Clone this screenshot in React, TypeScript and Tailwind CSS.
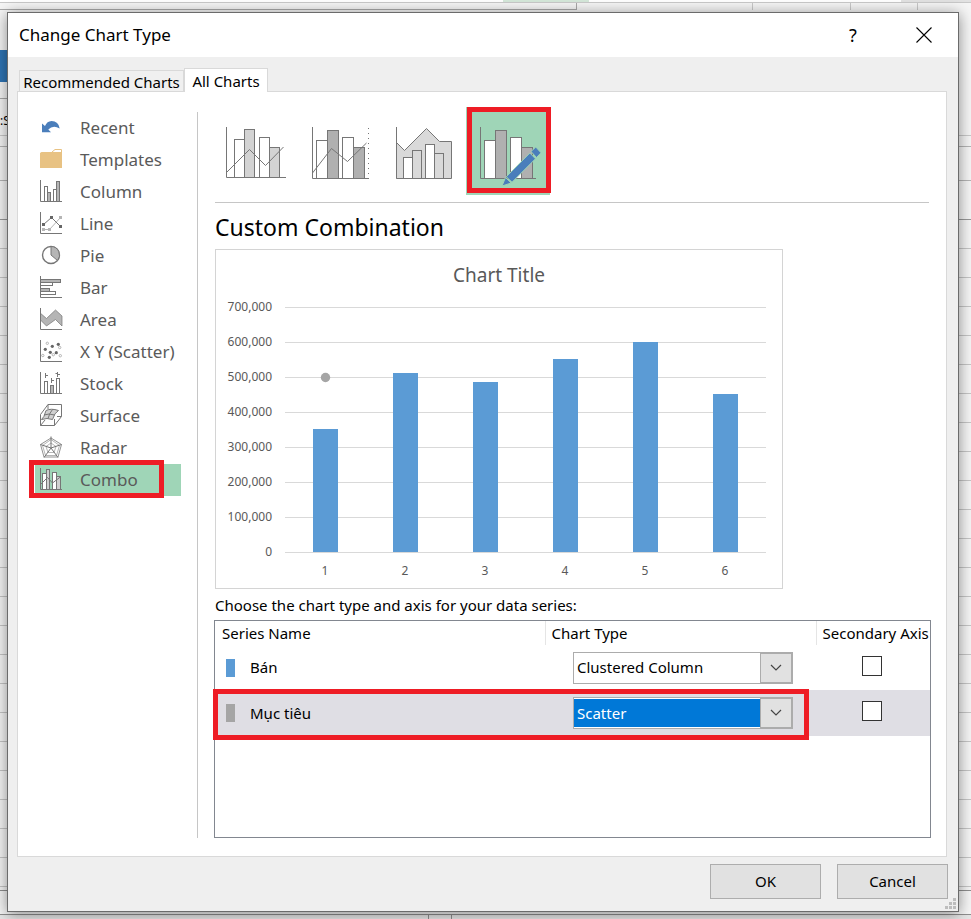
import { useState, type ReactNode } from 'react'

const GRAY = '#767676'

// ---- sidebar icons, all on a 24x24 grid ----

function Axis() {
  return <path d="M1.5 0V21.5H23" fill="none" stroke={GRAY} />
}

function Bar({ x, y, w, h, fill = '#fff' }: { x: number; y: number; w: number; h: number; fill?: string }) {
  return <rect x={x} y={y} width={w} height={h} fill={fill} stroke={GRAY} />
}

const categories: { name: string; icon: ReactNode }[] = [
  {
    name: 'Recent',
    icon: <path d="M3 7.5V16.3H12L9.3 13.6Q14 8.5 20.7 12.5Q19.5 5 12.5 5Q8 5.2 6 10Z" fill="#4a7ebb" />,
  },
  {
    name: 'Templates',
    icon: (
      <>
        <path d="M13 4L16 1.5H22.5V5" fill="#fff" stroke="#e8c283" />
        <path d="M1 5L2.5 4H23V20H1Z" fill="#e8c283" />
      </>
    ),
  },
  {
    name: 'Column',
    icon: (
      <>
        <Bar x={5.5} y={6.5} w={3} h={15} />
        <Bar x={8.5} y={12.5} w={3} h={9} fill="#b5b5b5" />
        <Bar x={14.5} y={9.5} w={3} h={12} />
        <Bar x={17.5} y={1.5} w={3} h={20} fill="#b5b5b5" />
        <Axis />
      </>
    ),
  },
  {
    name: 'Line',
    icon: (
      <>
        <path d="M4.5 17.5H10.5L21.5 5.5" fill="none" stroke="#b5b5b5" />
        <path d="M3 16H6V19H3ZM9 16H12V19H9ZM20 4H23V7H20Z" fill="#b5b5b5" />
        <path d="M4.5 12.5L12.5 5.5L21.5 14.5" fill="none" stroke={GRAY} />
        <path d="M3 11H6V14H3ZM11 4H14V7H11ZM20 13H23V16H20Z" fill="#666" />
        <Axis />
      </>
    ),
  },
  {
    name: 'Pie',
    icon: (
      <>
        <circle cx="12" cy="11" r="8.5" fill="#fff" stroke={GRAY} strokeWidth="1.4" />
        <path d="M12 11V2.5A8.5 8.5 0 0 1 18.5 16.5Z" fill="#b5b5b5" stroke={GRAY} />
      </>
    ),
  },
  {
    name: 'Bar',
    icon: (
      <>
        <Bar x={1.5} y={3.5} w={20} h={3} fill="#b5b5b5" />
        <Bar x={1.5} y={6.5} w={12} h={3} />
        <Bar x={1.5} y={12.5} w={9} h={3} fill="#b5b5b5" />
        <Bar x={1.5} y={15.5} w={15} h={3} />
        <Axis />
      </>
    ),
  },
  {
    name: 'Area',
    icon: (
      <>
        <path
          d="M1.5 5.3L7.5 10.5L16.5 2L23 8V18L16.5 11.5L7.5 18L1.5 12Z"
          fill="#b5b5b5"
          stroke={GRAY}
          strokeWidth="0.7"
        />
        <Axis />
      </>
    ),
  },
  {
    name: 'X Y (Scatter)',
    icon: (
      <>
        {[[8.3, 3.3], [20.7, 7.5], [3.8, 15.5], [14.3, 14.7], [21.3, 15.7]].map(([x, y]) => (
          <circle key={x} cx={x} cy={y} r="1.2" fill="#fff" stroke="#a5a5a5" strokeWidth="0.8" />
        ))}
        {[[19.3, 4.3], [13.3, 6.3], [6.3, 9.3], [11.3, 12.3], [17.3, 12.7], [10.3, 17.3]].map(([x, y]) => (
          <circle key={x} cx={x} cy={y} r="1.6" fill="#666" />
        ))}
        <Axis />
      </>
    ),
  },
  {
    name: 'Stock',
    icon: (
      <>
        <Bar x={5.5} y={9.5} w={3} h={12} />
        <Bar x={11.5} y={13.5} w={3} h={8} fill="#b5b5b5" />
        <Bar x={17.5} y={6.5} w={3} h={15} />
        <path d="M6.5 1V6M6.5 3.5H9M12.5 6V11M12.5 8.5H15M18.5 0V5M18.5 2.5H21M16.5 1.5H18.5" stroke={GRAY} />
        <Axis />
      </>
    ),
  },
  {
    name: 'Surface',
    icon: (
      <>
        <path
          d="M1.5 10.5L9 0.5H22.5V12.5L15.5 21.5H1.5ZM9 0.5V5M1.5 21.5L6 16M15.5 21.5V15M22.5 12.5H18"
          fill="none"
          stroke={GRAY}
        />
        <path d="M2.5 15.5Q5 14 7 6.5Q12 4 19.5 6.5Q15.5 8.5 13.5 15.5Q8 13.5 2.5 15.5Z" fill="#d0d0d0" stroke={GRAY} />
        <path d="M5 11Q10 9 15.5 11M9 14.5Q10.5 9 13.5 5.5" fill="none" stroke={GRAY} />
      </>
    ),
  },
  {
    name: 'Radar',
    icon: (
      <g fill="none" stroke={GRAY}>
        <path d="M12 3.5L20.5 9.5L17.5 19.5H6.5L3.5 9.5Z" stroke="#b5b5b5" />
        <path d="M12 7L17 10.5L15 16.5H9L7 10.5Z" stroke="#b5b5b5" />
        <path d="M12 0.5V12L22.5 8.5M12 12L19 21.5M12 12L5 21.5M12 12L1.5 8.5" />
        <path d="M1.5 8.5L12 2L22.5 8.5L19 21H5Z" strokeWidth="0.8" />
      </g>
    ),
  },
  {
    name: 'Combo',
    icon: (
      <>
        <Bar x={3.5} y={5.5} w={4} h={16} />
        <Bar x={7.5} y={1.5} w={3} h={20} fill="#d0d0d0" />
        <Bar x={13.5} y={4.5} w={4} h={17} />
        <Bar x={17.5} y={8.5} w={4} h={13} fill="#d0d0d0" />
        <path d="M2 16L8.5 9.5L13.5 15L22 8.5" fill="none" stroke={GRAY} />
        <Axis />
      </>
    ),
  },
]

// ---- combo subtypes, 84x88 each ----

const subtypes: { name: string; art: ReactNode }[] = [
  {
    name: 'Clustered Column - Line',
    art: (
      <>
        <Bar x={20.5} y={32.5} w={10} h={38} />
        <Bar x={30.5} y={22.5} w={10} h={48} fill="#d3d3d3" />
        <Bar x={45.5} y={30.5} w={10} h={40} />
        <Bar x={55.5} y={40.5} w={10} h={30} fill="#d3d3d3" />
        <path d="M12.5 65.5L35.5 42.5L51.5 58.5L69.5 40M12.5 20V70.5H72" fill="none" stroke={GRAY} />
      </>
    ),
  },
  {
    name: 'Clustered Column - Line on Secondary Axis',
    art: (
      <>
        <Bar x={18.5} y={33.5} w={11} h={38} />
        <Bar x={29.5} y={23.5} w={11} h={48} fill="#b0b0b0" />
        <Bar x={44.5} y={30.5} w={11} h={41} />
        <Bar x={55.5} y={40.5} w={11} h={31} fill="#b0b0b0" />
        <path d="M14.5 66L33.5 41.5L49.5 54.5L68.5 36M14.5 20V71.5H71" fill="none" stroke={GRAY} />
        <path d="M70.5 21V71" stroke={GRAY} strokeDasharray="1 4" />
      </>
    ),
  },
  {
    name: 'Stacked Area - Clustered Column',
    art: (
      <>
        <path d="M14.5 35.5L22.5 43.5L44.5 21.5L57.5 34.5H69.5V71.5H14.5Z" fill="#d9d9d9" stroke={GRAY} />
        <Bar x={21.5} y={50.5} w={9} h={21} />
        <Bar x={30.5} y={43.5} w={9} h={28} fill="#d9d9d9" />
        <Bar x={43.5} y={37.5} w={9} h={34} />
        <Bar x={52.5} y={46.5} w={9} h={25} fill="#d9d9d9" />
        <path d="M14.5 20V71.5" stroke={GRAY} />
      </>
    ),
  },
  {
    name: 'Custom Combination',
    art: (
      <>
        <Bar x={18.5} y={33.5} w={11} h={38} />
        <Bar x={29.5} y={23.5} w={11} h={48} fill="#b0b0b0" />
        <Bar x={44.5} y={30.5} w={11} h={41} />
        <Bar x={55.5} y={40.5} w={11} h={31} fill="#b0b0b0" />
        <path d="M14.5 20V71.5H70" fill="none" stroke={GRAY} />
        <g fill="#4a7ebb" stroke="#9fd5b7">
          <path d="M36 79L39.5 70.5L45.2 76Z" />
          <path d="M40.3 69.8L46 75.3L69.5 51.8L63.8 46Z" />
          <path d="M65 44.5L69.8 40L75 45.8L70.5 50.5Z" />
        </g>
      </>
    ),
  },
]

const values = [350000, 510000, 484000, 550000, 600000, 450000]
const ticks = [700000, 600000, 500000, 400000, 300000, 200000, 100000, 0]

const yOf = (v: number) => 303 - (v / 100000) * 35

function ChartPreview() {
  return (
    <div className="ml-px w-[568px] max-w-full border border-[#d4d4d4] bg-white">
      <svg viewBox="0 0 566 338" className="block w-full font-['Noto_Sans',sans-serif]" role="img" aria-label="Chart preview">
        <text x="283" y="32" textAnchor="middle" fontSize="19" fill="#595959">
          Chart Title
        </text>
        {ticks.map((t) => (
          <g key={t}>
            <rect x="69" y={yOf(t) - 1} width="481" height="1" fill="#d9d9d9" />
            <text x="56" y={yOf(t) + 3} textAnchor="end" fontSize="12" fill="#595959">
              {t.toLocaleString('en-US')}
            </text>
          </g>
        ))}
        {values.map((v, i) => (
          <g key={i}>
            <rect x={97 + i * 80} y={Math.floor(yOf(v)) - 1} width="25" height={303 - Math.floor(yOf(v))} fill="#5b9bd5" />
            <text x={109 + i * 80} y="325" textAnchor="middle" fontSize="12" fill="#595959">
              {i + 1}
            </text>
          </g>
        ))}
        <circle cx="109.5" cy="127.5" r="4.7" fill="#a5a5a5" />
      </svg>
    </div>
  )
}

interface SeriesRowProps {
  name: string
  type: string
  swatch: string
  active?: boolean
}

function SeriesRow({ name, type, swatch, active }: SeriesRowProps) {
  const [value, setValue] = useState(type)
  const [secondary, setSecondary] = useState(false)

  return (
    <tr className={active ? 'relative h-[46px] bg-[#dfdee4]' : 'h-[45px]'}>
      <td className="pl-[11px]">
        <div className="flex items-center gap-[15px]">
          <span className={`h-[18px] w-[9px] ${swatch}`} />
          {name}
        </div>
        {active && (
          <span className="pointer-events-none absolute -top-px -left-[2px] h-[51px] w-[596px] border-5 border-[#ee1c25]" />
        )}
      </td>
      <td className="pl-7">
        <div className="relative h-8 w-[220px] border border-[#acacac] bg-white py-px">
          <select
            aria-label={`${name} chart type`}
            value={value}
            onChange={(e) => setValue(e.target.value)}
            className={
              active
                ? 'h-full w-full appearance-none bg-[#0078d7] px-[3px] text-white outline-none'
                : 'h-full w-full appearance-none bg-white px-[3px] outline-none'
            }
          >
            <option>Clustered Column</option>
            <option>Line</option>
            <option>Area</option>
            <option>Scatter</option>
          </select>
          <span className="pointer-events-none absolute inset-y-0 right-0 flex w-8 items-center justify-center border border-[#acacac] bg-[#e1e1e1]">
            <svg width="12" height="8" viewBox="0 0 12 8" fill="none" stroke="#444" strokeWidth="1.2">
              <path d="M1 1L6 6L11 1" />
            </svg>
          </span>
        </div>
      </td>
      <td className="pb-1 pl-[46px]">
        <input
          type="checkbox"
          aria-label={`${name} on secondary axis`}
          checked={secondary}
          onChange={(e) => setSecondary(e.target.checked)}
          className="block size-5 appearance-none border border-[#333] bg-white checked:bg-[#333]"
        />
      </td>
    </tr>
  )
}

// Worksheet that shows round the edges of the dialog
function SheetBackdrop() {
  return (
    <div aria-hidden className="absolute inset-0 -z-10 flex flex-col overflow-hidden bg-[#f6f6f6]">
      <div className="flex h-[3px] shrink-0 border-b border-[#c9c9c9] bg-white">
        <span className="ml-[503px] w-[86px] bg-[#d5e8da]" />
        <span className="ml-auto w-[70px] bg-[#e2e2e2]" />
      </div>
      <div className="flex h-[7px] shrink-0">
        <span className="w-[577px] border-r border-b border-[#a9a9a9]" />
        <span className="w-[176px] border-r border-[#c9c9c9]" />
        <span className="w-[98px] border-r border-[#c9c9c9]" />
        <span className="w-[67px] border-r border-[#c9c9c9]" />
      </div>
      <div className="flex h-[126px] shrink-0 flex-col border-b border-[#c9c9c9] pt-10">
        <span className="h-8 w-2 bg-[#2e75b6]" />
        <span className="mt-4 h-px w-2 bg-[#a9a9a9]" />
        <span className="mt-[14px] text-xs leading-4">:S</span>
      </div>
      <div className="h-[11px] shrink-0 border-b border-[#b5b5b5]" />
      <div className="h-[34px] shrink-0 border-b border-[#b5b5b5]" />
      <div className="h-[39px] shrink-0 border-b border-[#999]" />
      {Array.from({ length: 23 }, (_, i) => (
        <div key={i} className="h-[29px] shrink-0 border-b border-[#c6c6c6]" />
      ))}
      <div className="h-1 shrink-0 border-b border-[#8f8f8f]" />
      <div className="h-6 shrink-0 border-b border-[#8f8f8f]" />
      <div className="flex-1 bg-[#e6e6e6]">
        <span className="ml-[428px] block h-full w-6 border-x border-[#8f8f8f]" />
      </div>
    </div>
  )
}

export default function App() {
  const [category, setCategory] = useState('Combo')
  const [subtype, setSubtype] = useState('Custom Combination')

  return (
    <div className="relative isolate flex min-h-screen pt-3 pr-3 pb-[7px] pl-[7px] font-['Noto_Sans',sans-serif] text-[15px] text-black">
      <SheetBackdrop />
      <div
        role="dialog"
        aria-label="Change Chart Type"
        className="flex min-w-0 flex-1 flex-col border border-[#6b6b6b] bg-[#efefef] shadow-[0_2px_14px_rgba(0,0,0,0.45)]"
      >
        <header className="flex h-11 items-center bg-white pl-[11px]">
          <h1 className="flex-1 text-[17px]">Change Chart Type</h1>
          <button aria-label="Help" className="w-10 text-lg">
            ?
          </button>
          <button aria-label="Close" className="mr-[17px] ml-[34px] flex w-[34px] justify-center">
            <svg width="16" height="16" viewBox="0 0 16 16" stroke="#000" strokeWidth="1.1">
              <path d="M0.5 0.5L15.5 15.5M15.5 0.5L0.5 15.5" />
            </svg>
          </button>
        </header>

        <div className="flex items-end pt-[11px] pl-[11px]">
          <button className="h-[21px] w-[165px] border border-b-0 border-[#d9d9d9] bg-[#f0f0f0] pt-px leading-5 whitespace-nowrap">
            Recommended Charts
          </button>
          <button className="relative -mb-px h-6 w-[84px] border border-b-0 border-[#d9d9d9] bg-white leading-5 whitespace-nowrap">
            All Charts
          </button>
        </div>

        <main className="mr-[11px] ml-[9px] flex flex-1 border border-[#d9d9d9] bg-white pt-5 pb-[18px] pl-[17px]">
          <nav className="mr-4 w-[146px]">
            {categories.map((c) => (
              <button
                key={c.name}
                onClick={() => setCategory(c.name)}
                className={
                  c.name === category
                    ? 'relative flex h-8 w-full items-center gap-[17px] bg-[#9fd5b7] pl-1 text-[17px] whitespace-nowrap text-[#5a5a5a]'
                    : 'relative flex h-8 w-full items-center gap-[17px] pl-1 text-[17px] whitespace-nowrap text-[#5a5a5a]'
                }
              >
                <svg width="24" height="24" viewBox="0 0 24 24" className="shrink-0">
                  {c.icon}
                </svg>
                {c.name}
                {c.name === category && (
                  <span className="pointer-events-none absolute -top-1 -left-[6px] h-[38px] w-[135px] border-5 border-[#ee1c25]" />
                )}
              </button>
            ))}
          </nav>

          <section className="flex min-w-0 flex-1 flex-col border-l border-[#c6c6c6] pr-[15px] pl-4">
            <div className="-mt-[5px] flex">
              {subtypes.map((s) => (
                <button
                  key={s.name}
                  aria-label={s.name}
                  onClick={() => setSubtype(s.name)}
                  className={s.name === subtype ? 'relative bg-[#9fd5b7]' : 'relative'}
                >
                  <svg width="84" height="88" viewBox="0 0 84 88">
                    {s.art}
                  </svg>
                  {s.name === subtype && (
                    <span className="pointer-events-none absolute top-0 -right-px bottom-[2px] left-px border-5 border-[#ee1c25]" />
                  )}
                </button>
              ))}
            </div>
            <hr className="mt-[7px] mr-[2px] ml-px border-[#c6c6c6]" />

            <h2 className="pt-2 pb-[6px] pl-px text-[23px] leading-8">Custom Combination</h2>
            <ChartPreview />
            <p className="pt-[5px] pb-1 pl-px leading-[22px]">Choose the chart type and axis for your data series:</p>

            <div className="flex-1 border border-[#828790]">
              <table className="w-full table-fixed border-collapse text-left">
                <thead>
                  <tr className="h-6 whitespace-nowrap">
                    <th className="w-[330px] border-r border-[#e5e5e5] pl-[7px] font-normal">Series Name</th>
                    <th className="w-[271px] border-r border-[#e5e5e5] pl-[6px] font-normal">Chart Type</th>
                    <th className="pl-[6px] font-normal">Secondary Axis</th>
                  </tr>
                </thead>
                <tbody>
                  <SeriesRow name="Bán" type="Clustered Column" swatch="bg-[#5b9bd5]" />
                  <SeriesRow name="Mục tiêu" type="Scatter" swatch="bg-[#a5a5a5]" active />
                </tbody>
              </table>
            </div>
          </section>
        </main>

        <footer className="relative flex h-[54px] justify-end gap-4 pt-[7px] pr-[10px]">
          <button className="h-[35px] w-[111px] border border-[#adadad] bg-[#e1e1e1]">OK</button>
          <button className="h-[35px] w-[111px] border border-[#adadad] bg-[#e1e1e1]">Cancel</button>
          <svg width="11" height="11" viewBox="0 0 11 11" fill="#bdbdbd" className="absolute right-[2px] bottom-[2px]">
            <path d="M8 0h3v3h-3zM4 4h3v3h-3zM8 4h3v3h-3zM0 8h3v3h-3zM4 8h3v3h-3zM8 8h3v3h-3z" />
          </svg>
        </footer>
      </div>
    </div>
  )
}
